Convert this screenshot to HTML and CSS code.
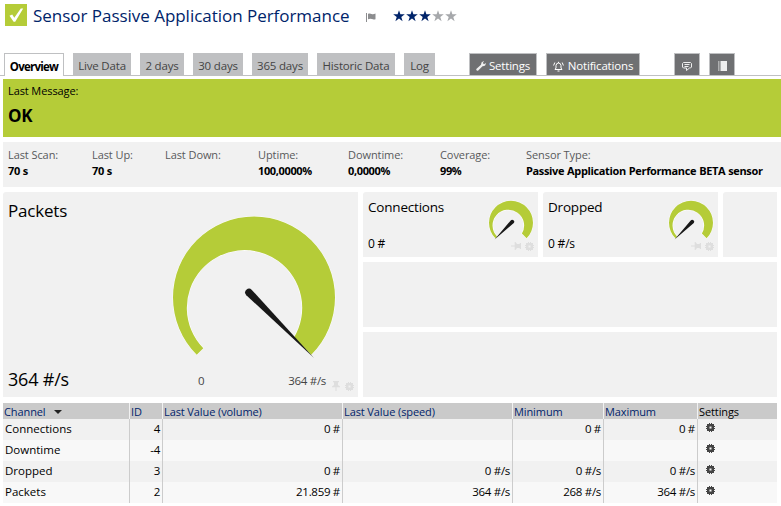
FILE: index.html
```html
<!DOCTYPE html>
<html lang="en">
<head>
<meta charset="utf-8">
<title>Sensor Passive Application Performance</title>
<link rel="stylesheet" href="styles.css">
</head>
<body>
<svg class="defs" width="0" height="0" aria-hidden="true">
  <symbol id="gear" viewBox="0 0 9 9"><path fill-rule="evenodd" d="M3 0H4V1H5V0H6V1H8V3H9V4H8V5H9V6H8V8H6V9H5V8H4V9H3V8H1V6H0V5H1V4H0V3H1V1H3ZM3.500 3.500V5.500H5.500V3.500Z"/></symbol>
  <symbol id="pin" viewBox="0 0 8 10"><path d="M1 0H7V1L6 1.5V4L8 5.5V6.3H4.5V10H3.5V6.3H0V5.5L2 4V1.5L1 1Z"/></symbol>
  <symbol id="star" viewBox="0 0 12 12"><path d="M6 .2L7.4 4.3H11.8L8.3 6.9L9.6 11.2L6 8.6L2.4 11.2L3.7 6.9L.2 4.3H4.6Z"/></symbol>
  <symbol id="small-gauge" viewBox="0 0 48 43">
    <path class="arc" d="M7.4 39.3A22 22 0 1 1 38.6 39.3L33.9 34.6A15.8 15.8 0 1 0 9.1 37.6Z"/>
    <path class="needle" d="M6.6 40.4L22.7 21.5A1.7 1.7 0 0 1 25.8 23.9Z"/>
  </symbol>
</svg>
<header class="head">
  <svg class="check" viewBox="0 0 22 22"><path d="M4.500 11.800L7.200 10.600L9.300 13.800L15.800 4.500H18.200L10.200 17.800H8.600Z"/></svg>
  <h1 class="title">Sensor Passive Application Performance</h1>
  <svg class="flag" viewBox="0 0 10 9"><path d="M0 0H1V9H0ZM2 .8Q4 0 5.5 .9T9.5 .6V6.2Q7.500 7 6 6.100T2 6.200Z"/></svg>
  <div class="stars">
    <svg class="star on"><use href="#star"/></svg><svg class="star on"><use href="#star"/></svg><svg class="star on"><use href="#star"/></svg><svg class="star"><use href="#star"/></svg><svg class="star"><use href="#star"/></svg>
  </div>
</header>
<nav class="tabs">
  <a class="tab active w60"><span class="t-over">Overview</span></a>
  <a class="tab w58">Live Data</a>
  <a class="tab w44">2 days</a>
  <a class="tab w50">30 days</a>
  <a class="tab w56">365 days</a>
  <a class="tab w78">Historic Data</a>
  <a class="tab w31">Log</a>
  <a class="tab dark w68 first-tool"><svg class="tool" viewBox="0 0 10 10"><path d="M.3 8L5 3.700Q4.800 1 7.300.2L8 .3L6.800 2L8 3.200L9.800 1.900Q10 5 6.500 5.200L2 9.700Q.9 10 .3 9Z"/></svg>Settings</a>
  <a class="tab dark w94"><svg class="bell" viewBox="0 0 11 11"><path d="M2 8.500L3 7V4.500Q3.200 2 5.500 2T8 4.500V7L9 8.500ZM4.500 10H6.500M5.500 2V.8M.6 4.500L1.800 1.500M10.400 4.500L9.200 1.500"/></svg>Notifications</a>
  <a class="tab dark w26 notes"><svg class="note" viewBox="0 0 10 9"><path d="M1.500.5H8.500L9.500 1.500V5L8.500 6H7.500L4.500 8.500V6H1.500L.5 5V1.500ZM2.500 2.500H7.500M2.500 4.500H6.500"/></svg></a>
  <a class="tab dark w26"><svg class="book" viewBox="0 0 9 10"><path d="M2.500 0H9V10H2.500ZM0 .5H1.500V1.500H0ZM0 2.500H1.500V3.500H0ZM0 4.500H1.500V5.500H0ZM0 6.500H1.500V7.500H0ZM0 8.500H1.500V9.500H0Z"/></svg></a>
</nav>
<main>
  <section class="banner"><p>Last Message:</p><strong>OK</strong></section>
  <dl class="facts">
    <div><dt>Last Scan:</dt><dd>70 s</dd></div>
    <div><dt>Last Up:</dt><dd>70 s</dd></div>
    <div><dt>Last Down:</dt><dd></dd></div>
    <div><dt>Uptime:</dt><dd>100,0000%</dd></div>
    <div><dt>Downtime:</dt><dd>0,0000%</dd></div>
    <div><dt>Coverage:</dt><dd>99%</dd></div>
    <div><dt>Sensor Type:</dt><dd class="type">Passive Application Performance BETA sensor</dd></div>
  </dl>
  <section class="gauges">
    <article class="card big">
      <div class="reading"><h2>Packets</h2><span>364 #/s</span></div>
      <div class="dial">
        <svg class="gauge" viewBox="0 0 170 152">
          <path class="arc" d="M28.700 142.800A81 81 0 1 1 143.300 142.800L126 125.500A57.700 57.700 0 1 0 35.300 136.200Z"/>
          <path class="needle" d="M146 146L78.300 83.200A3.800 3.800 0 1 1 83.800 77.900Z"/>
        </svg>
        <div class="scale"><span>0</span><span>364 #/s</span></div>
      </div>
      <div class="tools"><svg class="pin"><use href="#pin"/></svg><svg class="gear"><use href="#gear"/></svg></div>
    </article>
    <article class="card small">
      <div class="reading"><h3>Connections</h3><span>0 #</span></div>
      <div class="side"><svg class="mini"><use href="#small-gauge"/></svg><div class="tools"><svg class="pin lying"><use href="#pin"/></svg><svg class="gear"><use href="#gear"/></svg></div></div>
    </article>
    <article class="card small">
      <div class="reading"><h3>Dropped</h3><span>0 #/s</span></div>
      <div class="side"><svg class="mini"><use href="#small-gauge"/></svg><div class="tools"><svg class="pin lying"><use href="#pin"/></svg><svg class="gear"><use href="#gear"/></svg></div></div>
    </article>
    <div class="card"></div>
    <div class="card wide"></div>
    <div class="card wide"></div>
  </section>
  <table>
    <colgroup><col class="c1"><col class="c2"><col class="c3"><col class="c4"><col class="c5"><col class="c6"><col class="c7"></colgroup>
    <thead><tr><th>Channel<i class="sort"></i></th><th>ID</th><th>Last Value (volume)</th><th>Last Value (speed)</th><th>Minimum</th><th>Maximum</th><th class="plain">Settings</th></tr></thead>
    <tbody>
      <tr><td>Connections</td><td>4</td><td>0 #</td><td></td><td>0 #</td><td>0 #</td><td><svg class="gear"><use href="#gear"/></svg></td></tr>
      <tr><td>Downtime</td><td>-4</td><td></td><td></td><td></td><td></td><td><svg class="gear"><use href="#gear"/></svg></td></tr>
      <tr><td>Dropped</td><td>3</td><td>0 #</td><td>0 #/s</td><td>0 #/s</td><td>0 #/s</td><td><svg class="gear"><use href="#gear"/></svg></td></tr>
      <tr><td>Packets</td><td>2</td><td>21.859 #</td><td>364 #/s</td><td>268 #/s</td><td>364 #/s</td><td><svg class="gear"><use href="#gear"/></svg></td></tr>
    </tbody>
  </table>
</main>
</body>
</html>
```
FILE: styles.css
```css
* { box-sizing: border-box; }
body { margin: 0; background: #fff; color: #000; font: 12px/16px "Open Sans", "Noto Sans", sans-serif; letter-spacing: -0.2px; overflow: hidden; }
svg { display: block; flex: none; }
.defs { position: absolute; }
h1, h2, h3, p, dl, dd { margin: 0; font-weight: 400; }
.head { height: 53px; display: flex; align-items: flex-start; padding-left: 5px; }
.check { width: 22px; height: 22px; margin-top: 4px; background: #b5cc38; fill: #fff; }
.title { width: 339px; padding: 4px 0 0 6px; font-size: 17px; line-height: 24px; letter-spacing: -0.03px; color: #00246a; white-space: nowrap; }
.flag { width: 10px; height: 9px; margin-top: 13px; fill: #8c8d8f; }
.stars { display: flex; gap: 1px; margin: 10px 0 0 17px; }
.star { width: 12px; height: 12px; fill: #a6a8ab; }
.star.on { fill: #00246a; }
.tabs { height: 23px; display: flex; gap: 9px; padding-left: 4px; border-bottom: 1px solid #bfc0c2; font-size: 11.5px; letter-spacing: -0.18px; }
.tab { display: flex; align-items: center; justify-content: center; height: 22px; padding-top: 4px; background: #bfc0c2; color: #444; white-space: nowrap; }
.tab.active { height: 23px; background: #fff; border: 1px solid #bfc0c2; border-bottom: 0; color: #000; font-weight: 700; padding-top: 3px; }
.tab.dark { background: #6f7072; border: 1px solid #bfc0c2; border-bottom: 0; color: #fff; padding-top: 3px; }
.w60 { width: 60px; } .w58 { width: 58px; } .w44 { width: 44px; } .w50 { width: 50px; } .w56 { width: 56px; } .w78 { width: 78px; } .w31 { width: 31px; } .w68 { width: 68px; } .w94 { width: 94px; } .w26 { width: 26px; }
.t-over { letter-spacing: -0.75px; }
.first-tool { margin-left: 25px; }
.notes { margin-left: 25px; }
.tool { width: 10px; height: 10px; margin-right: 3px; fill: #eee; }
.bell { width: 11px; height: 11px; margin-right: 4px; fill: none; stroke: #fff; }
.note { width: 10px; height: 9px; fill: none; stroke: #eee; }
.book { width: 9px; height: 10px; margin-top: -1px; fill: #eee; }
main { padding: 3px 0 0 3px; }
.banner { height: 58px; padding: 4px 5px; background: #b5cc38; }
.banner p { font-size: 11px; letter-spacing: -0.1px; }
.banner strong { display: block; margin-top: 6px; font-size: 17px; line-height: 22px; }
.facts { height: 45px; margin-top: 5px; padding: 5px; background: #f1f1f1; display: grid; grid-template-columns: 84px 73px 93px 90px 92px 86px 1fr; white-space: nowrap; }
.facts dt { color: #58595b; font-size: 11px; letter-spacing: -0.08px; }
.facts dd { font-weight: 700; font-size: 11px; letter-spacing: -0.36px; word-spacing: 0.5px; }
.gauges { display: grid; grid-template: repeat(3, 65px) / 355px 175px 175px 54px; gap: 5px; margin-top: 5px; }
.card { background: #f1f1f1; display: flex; border-top-left-radius: 3px; }
.big { grid-row: 1 / 4; }
.wide { grid-column: 2 / 5; border-radius: 0; }
.reading { display: flex; flex-direction: column; justify-content: space-between; padding: 7px 5px 5px; white-space: nowrap; }
.big .reading { width: 165px; font-size: 18px; line-height: 24px; padding-bottom: 6px; }
.big h2 { font-size: 17px; line-height: 24px; }
.small .reading { width: 121px; padding: 6px 5px 5px; }
.small h3 { font-size: 13.5px; line-height: 18px; letter-spacing: -0.2px; }
.dial { width: 170px; padding-top: 20px; }
.gauge { width: 170px; height: 152px; }
.arc { fill: #b5cc38; stroke: #fff; stroke-width: 1px; paint-order: stroke; }
.needle { fill: #181818; }
.scale { display: flex; justify-content: space-between; padding: 9px 12px 0 30px; color: #444; font-size: 11.5px; letter-spacing: -0.3px; }
.tools { display: flex; align-items: center; fill: #dedede; align-self: flex-end; }
.big .tools { margin: 0 0 6px -6px; gap: 5px; }
.pin { width: 8px; height: 10px; }
.gear { width: 9px; height: 9px; }
.lying { transform: rotate(90deg); }
.side { width: 54px; display: flex; flex-direction: column; padding-top: 7px; }
.mini { width: 48px; height: 43px; margin-left: 4px; }
.small .tools { gap: 5px; margin: -1px 4px 0 0; }
table { width: 774px; margin-top: 6px; border-collapse: separate; border-spacing: 0; table-layout: fixed; }
.c1 { width: 127px; } .c2 { width: 33px; } .c3 { width: 180px; } .c4 { width: 170px; } .c5 { width: 91px; } .c6 { width: 94px; } .c7 { width: 79px; }
th { height: 16px; padding: 2px 0 0 1px; background: #cacaca; border-right: 1px solid #f1f1f1; color: #00246a; font-weight: 400; font-size: 11px; letter-spacing: -0.1px; line-height: 14px; text-align: left; white-space: nowrap; }
th.plain { color: #000; }
td { height: 21px; padding: 1px 2px 2px; text-align: right; border-right: 1px solid #ccc; line-height: 18px; font-size: 11.5px; letter-spacing: -0.3px; }
td:first-child { text-align: left; letter-spacing: 0; }
td:last-child { padding: 0 2px 3px; }
td:last-child, th:last-child { border-right: 0; }
td:last-child .gear { width: 9px; height: 9px; margin: -1px 0 0 6px; fill: #444; }
tbody tr { background: #f1f1f1; }
tbody tr:nth-child(even) { background: #f8f8f8; }
.sort { display: inline-block; margin: 0 0 2px 8px; border: 4px solid transparent; border-top: 4px solid #222; border-bottom: 0; }
```
